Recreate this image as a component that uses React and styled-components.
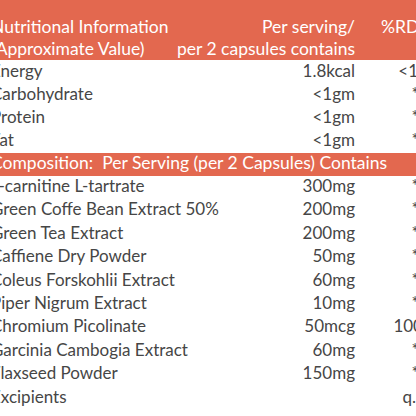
import styled, { createGlobalStyle } from 'styled-components';

const GlobalStyle = createGlobalStyle`
  html, body {
    margin: 0;
    padding: 0;
    background: #ffffff;
  }
  body {
    width: 416px;
    height: 416px;
    overflow: hidden;
  }
`;

const Sheet = styled.div`
  width: 416px;
  height: 416px;
  overflow: hidden;
  font-family: Lato, 'Open Sans', sans-serif;
  font-size: 17px;
  color: #464646;
`;

const Table = styled.div`
  display: grid;
  grid-template-columns: 230px 134px 120px;
  margin-left: -9px;
  width: 484px;
`;

const HeadCell = styled.div`
  background: #e3684f;
  color: #ffffff;
  height: 60px;
  margin-bottom: 1px;
  padding-top: 16px;
  box-sizing: border-box;
  font-size: 17.5px;
  line-height: 22px;
  white-space: nowrap;
  direction: ${({ $align }) => ($align === 'right' ? 'rtl' : 'ltr')};
  text-align: ${({ $align }) => $align || 'left'};
  padding-left: ${({ $padLeft }) => $padLeft || 0}px;

  span {
    direction: ltr;
    unicode-bidi: embed;
  }
`;

const Band = styled.div`
  grid-column: 1 / -1;
  background: #e3684f;
  color: #ffffff;
  height: 23px;
  font-size: 17.5px;
  line-height: 19px;
  white-space: pre;
`;

const Cell = styled.div`
  height: ${({ $h }) => $h || 23}px;
  line-height: 19px;
  white-space: nowrap;
  text-align: ${({ $align }) => $align || 'left'};
`;

const nutrition = [
  ['Energy', '1.8kcal', '<1%'],
  ['Carbohydrate', '<1gm', '*'],
  ['Protein', '<1gm', '*'],
  ['Fat', '<1gm', '*'],
];

const composition = [
  ['L-carnitine L-tartrate', '300mg', '*'],
  ['Green Coffe Bean Extract 50%', '200mg', '*'],
  ['Green Tea Extract', '200mg', '*'],
  ['Caffiene Dry Powder', '50mg', '*'],
  ['Coleus Forskohlii Extract', '60mg', '*'],
  ['Piper Nigrum Extract', '10mg', '*'],
  ['Chromium Picolinate', '50mcg', '100%'],
  ['Garcinia Cambogia Extract', '60mg', '*'],
  ['Flaxseed Powder', '150mg', '*'],
  ['Excipients', '', 'q.s.'],
];

const Row = ({ item, h }) => (
  <>
    <Cell $h={h}>{item[0]}</Cell>
    <Cell $h={h} $align="right">{item[1]}</Cell>
    <Cell $h={h} $align="center">{item[2]}</Cell>
  </>
);

const App = () => (
  <Sheet>
    <GlobalStyle />
    <Table>
      <HeadCell>
        Nutritional Information
        <br />
        (Approximate Value)
      </HeadCell>
      <HeadCell $align="right">
        <span>Per serving/</span>
        <br />
        <span>per 2 capsules contains</span>
      </HeadCell>
      <HeadCell $padLeft={26}>%RDA</HeadCell>
      {nutrition.map((item) => (
        <Row key={item[0]} item={item} />
      ))}
      <Band>Composition:  Per Serving (per 2 Capsules) Contains</Band>
      {composition.map((item) => (
        <Row key={item[0]} item={item} h={23.4} />
      ))}
    </Table>
  </Sheet>
);

export default App;
